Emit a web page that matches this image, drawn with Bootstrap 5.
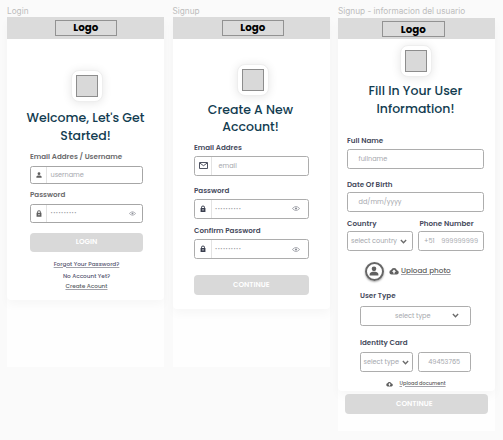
<!DOCTYPE html>
<html lang="en">
<head>
<meta charset="utf-8">
<meta name="viewport" content="width=device-width, initial-scale=1">
<title>Login and signup screens</title>
<link href="https://cdn.jsdelivr.net/npm/bootstrap@5.3.0/dist/css/bootstrap.min.css" rel="stylesheet">
<style>
body{font-family:Poppins,Inter,"Open Sans",sans-serif;background:#fafafa;font-size:6.5px;line-height:10px;color:#5d5f66;overflow:hidden}
.board{padding:6px 0 0 7px;gap:8.5px}
.screen{width:157px;flex:none}
.frame-name{font-family:Inter,sans-serif;font-size:8.25px;height:11px;line-height:10px;color:#bdbdbd;white-space:nowrap}
.frame{background:#fefefe;height:349.5px}
.third .frame{margin-top:1px;height:413px}
.sheet{background:#fff;border-radius:0 0 4px 4px;box-shadow:0 5px 10px rgba(0,0,0,.03);height:283px}
.second .sheet{height:292px}
.third .sheet{height:372.5px}
.topbar{background:#dbdbdb;height:21.5px;padding-top:2.5px}
.third .topbar{height:21px}
.brand{width:62.5px;height:16px;border:1px solid #929292;color:#000;font-size:10.3px;line-height:15px;font-weight:700;margin-left:47.5px}
.first .brand,.second .brand{line-height:14px}
.second .brand{margin-left:49px}
.third .brand{margin-left:44px}
.tile{width:32px;height:32px;border-radius:8px;background:#fff;border:1px solid #eee;box-shadow:0 1px 10px rgba(0,0,0,.1);margin:31px 0 0 64px}
.second .tile{margin:25px 0 0 64px}
.third .tile{margin:6px 0 0 62px}
.tile span{width:22px;height:22px;background:#d9d9d9;border:1px solid #8d8d8d}
.heading{font-size:12.5px;line-height:18px;font-weight:500;color:#123c50;margin:7px 0 0;white-space:nowrap}
.second .heading{line-height:17px;margin:5px 1px 0 0}
.third .heading{line-height:18.5px;margin:4.75px 2px 0 0}
.pad{padding:0 21px 0 23px}
.second .pad{padding:0 21px 0 21.5px}
.third .pad{padding:0 11px 0 9px}
.third .pad-in{padding:0 13.5px 0 13px}
.caption{font-weight:600;font-size:7.15px;line-height:10px;height:10px;white-space:nowrap;color:#6a6a6c;margin:5.5px 0 4.5px}
.first .heading + .pad .caption:first-child{margin:7px 0 4px}
.second .caption{margin:10px 0 3px}
.second .caption:first-child{margin-top:8px}
.second .caption.confirm{margin-top:7.5px}
.second .caption,.third .caption{color:#454a5c}
.third .caption{margin:0}
.gap-name{padding:17.25px 0 3.25px}
.gap-birth{padding:10.25px 0 2px}
.gap-phone{padding:7px 0 2.5px}
.gap-type{padding:10.5px 0 4.5px}
.gap-card{padding:12px 0 4.5px}
.field{height:20px;border:1px solid #adadad;border-radius:2.5px;background:#fff;color:#a5a7ad;line-height:18px;white-space:nowrap}
.first .field{height:18.5px;border-color:#a6a6a6}
.addon{width:16px;height:100%;border-right:1px solid #e3e3e3;flex:none;color:#5f5f5f;margin-right:3.5px}
.second .addon{color:#3b4050;width:17px;margin-right:3px}
.second .mail-text{padding-left:3.5px}
.dots{font-size:5.2px;letter-spacing:.5px;color:#94969c}
.eye{color:#8d9098}
.first .eye{margin-right:6px}
.second .eye{margin-right:8px}
.cta{height:20px;border-radius:4px;background:#d9d9d9;color:#fff;font-weight:600;font-size:7.2px;line-height:20px;padding:0;border:0;display:block;width:100%;margin-top:16px}
.first .cta{height:18.5px;line-height:18.5px;margin-top:10.5px}
.third .cta{width:143.5px;margin:3px 0 0 6.5px;padding-right:4px}
.tiny{font-size:5.75px;line-height:10px;font-weight:500;white-space:nowrap}
.links{padding-top:7.5px}
.links .none{padding-top:2px}
.ink{color:#54546f}
.chev{color:#6b6b6b}
svg{display:block;flex:none}
u,.under{text-decoration:underline;text-decoration-color:#a2a2aa;text-underline-offset:1px}
.photo-row{height:19px;margin-top:10.5px;padding-left:17.5px;color:#606060}
.avatar{width:19px;height:19px;border:2px solid #666;border-radius:50%;box-shadow:0 1px 2px rgba(0,0,0,.35);margin-right:5.5px}
.photo{font-size:7.25px;font-weight:500;margin-left:2px}
.doc-row{height:10px;margin-top:6.5px;padding-left:26px;color:#5c5c5c}
.doc{font-size:5.05px;font-weight:500;margin-left:6.5px}
.w-country{width:66px;padding:0 5px 0 3px}
.w-phone{width:66px;padding:0 5px}
.w-card{width:53px;padding:0 3.5px 0 2.5px}
.w-number{width:52.5px}
.w-label{width:72.5px}
.indent{padding-left:10.5px}
.type-text{padding-left:34px}
.type-chev{margin-right:11px}
</style>
</head>
<body>
<svg class="d-none">
<symbol id="user" viewBox="0 0 16 16"><circle cx="8" cy="4.5" r="3.7"/><path d="M1 15v-2.200C1 10 5 9.200 8 9.200s7 .8 7 3.600V15z"/></symbol>
<symbol id="lock" viewBox="0 0 16 18"><path fill-rule="evenodd" d="M3 7V5.500a5 5 0 0 1 10 0V7h1.500v10.500h-13V7zM5.200 7h5.600V5.500a2.800 2.800 0 0 0-5.600 0zM8 10.500a1.700 1.700 0 1 0 .01 0z"/></symbol>
<symbol id="eye" viewBox="0 0 20 12"><path d="M1 6q9-10 18 0q-9 10-18 0z" fill="none" stroke="currentColor" stroke-width="1.800"/><circle cx="10" cy="6" r="2.800"/></symbol>
<symbol id="mail" viewBox="0 0 9 7"><path d="M.5.500h8v6h-8zM1 1.200L4.500 3.700 8 1.200" fill="none" stroke="currentColor" stroke-width=".9"/></symbol>
<symbol id="down" viewBox="0 0 12 8"><path d="M1.500 1.500L6 6l4.500-4.500" fill="none" stroke="currentColor" stroke-width="2.400"/></symbol>
<symbol id="cloud" viewBox="0 0 24 18"><path fill-rule="evenodd" d="M6 17.500a5.500 5.500 0 0 1-1-10.800A7.500 7.500 0 0 1 19 7a5.300 5.300 0 0 1-.5 10.500zM12 5.500l-5 5.300h3.200v4h3.600v-4H17z"/></symbol>
</svg>
<main class="board d-flex align-items-start">

<section class="screen first">
<div class="frame-name">Login</div>
<div class="frame"><div class="sheet">
<div class="topbar"><div class="brand text-center">Logo</div></div>
<div class="tile d-flex align-items-center justify-content-center"><span></span></div>
<h1 class="heading text-center">Welcome, Let's Get<br>Started!</h1>
<div class="pad">
<div class="caption">Email Addres / Username</div>
<div class="field d-flex align-items-center"><span class="addon d-flex align-items-center justify-content-center"><svg width="6" height="6" fill="currentColor"><use href="#user"/></svg></span>username</div>
<div class="caption">Password</div>
<div class="field d-flex align-items-center"><span class="addon d-flex align-items-center justify-content-center"><svg width="6" height="7" fill="currentColor"><use href="#lock"/></svg></span><span class="dots">••••••••••</span><svg class="eye ms-auto" width="7" height="5" fill="currentColor"><use href="#eye"/></svg></div>
<button class="btn cta">LOGIN</button>
<div class="links text-center tiny"><div class="ink under">Forgot Your Password?</div><div class="none ink">No Account Yet?</div><div class="under">Create Acount</div></div>
</div>
</div></div>
</section>

<section class="screen second">
<div class="frame-name">Signup</div>
<div class="frame"><div class="sheet">
<div class="topbar"><div class="brand text-center">Logo</div></div>
<div class="tile d-flex align-items-center justify-content-center"><span></span></div>
<h1 class="heading text-center">Create A New<br>Account!</h1>
<div class="pad">
<div class="caption">Email Addres</div>
<div class="field d-flex align-items-center"><span class="addon d-flex align-items-center justify-content-center"><svg width="9" height="7" fill="currentColor"><use href="#mail"/></svg></span><span class="mail-text">email</span></div>
<div class="caption">Password</div>
<div class="field d-flex align-items-center"><span class="addon d-flex align-items-center justify-content-center"><svg width="6" height="7.500" fill="currentColor"><use href="#lock"/></svg></span><span class="dots">••••••••••</span><svg class="eye ms-auto" width="8" height="5" fill="currentColor"><use href="#eye"/></svg></div>
<div class="caption confirm">Confirm Password</div>
<div class="field d-flex align-items-center"><span class="addon d-flex align-items-center justify-content-center"><svg width="6" height="7.500" fill="currentColor"><use href="#lock"/></svg></span><span class="dots">••••••••••</span><svg class="eye ms-auto" width="8" height="5" fill="currentColor"><use href="#eye"/></svg></div>
<button class="btn cta">CONTINUE</button>
</div>
</div></div>
</section>

<section class="screen third">
<div class="frame-name">Signup - informacion del usuario</div>
<div class="frame"><div class="sheet">
<div class="topbar"><div class="brand text-center">Logo</div></div>
<div class="tile d-flex align-items-center justify-content-center"><span></span></div>
<h1 class="heading text-center">Fill In Your User<br>Information!</h1>
<div class="pad">
<div class="gap-name"><div class="caption">Full Name</div></div>
<div class="field indent">fullname</div>
<div class="gap-birth"><div class="caption">Date Of Birth</div></div>
<div class="field indent">dd/mm/yyyy</div>
<div class="gap-phone d-flex"><div class="caption w-label">Country</div><div class="caption">Phone Number</div></div>
<div class="d-flex justify-content-between">
<div class="field w-country d-flex align-items-center justify-content-between">select country<svg class="chev" width="7" height="5"><use href="#down"/></svg></div>
<div class="field w-phone d-flex justify-content-between"><span>+51</span><span>999999999</span></div>
</div>
<div class="photo-row d-flex align-items-center">
<span class="avatar d-flex align-items-center justify-content-center"><svg width="10" height="10" fill="currentColor"><use href="#user"/></svg></span>
<svg width="10" height="8" fill="currentColor"><use href="#cloud"/></svg><u class="photo">Upload photo</u>
</div>
<div class="pad-in">
<div class="gap-type"><div class="caption">User Type</div></div>
<div class="field d-flex align-items-center justify-content-between"><span class="type-text">select type</span><svg class="chev type-chev" width="7" height="5"><use href="#down"/></svg></div>
<div class="gap-card"><div class="caption">Identity Card</div></div>
<div class="d-flex justify-content-between">
<div class="field w-card d-flex align-items-center justify-content-between">select type<svg class="chev" width="7" height="5"><use href="#down"/></svg></div>
<div class="field w-number text-center">49453765</div>
</div>
<div class="doc-row d-flex align-items-center"><svg width="7" height="6" fill="currentColor"><use href="#cloud"/></svg><u class="doc">Upload document</u></div>
</div>
</div>
</div>
<button class="btn cta">CONTINUE</button>
</div>
</section>
</main>
<script src="https://cdn.jsdelivr.net/npm/bootstrap@5.3.0/dist/js/bootstrap.bundle.min.js"></script>
</body>
</html>
